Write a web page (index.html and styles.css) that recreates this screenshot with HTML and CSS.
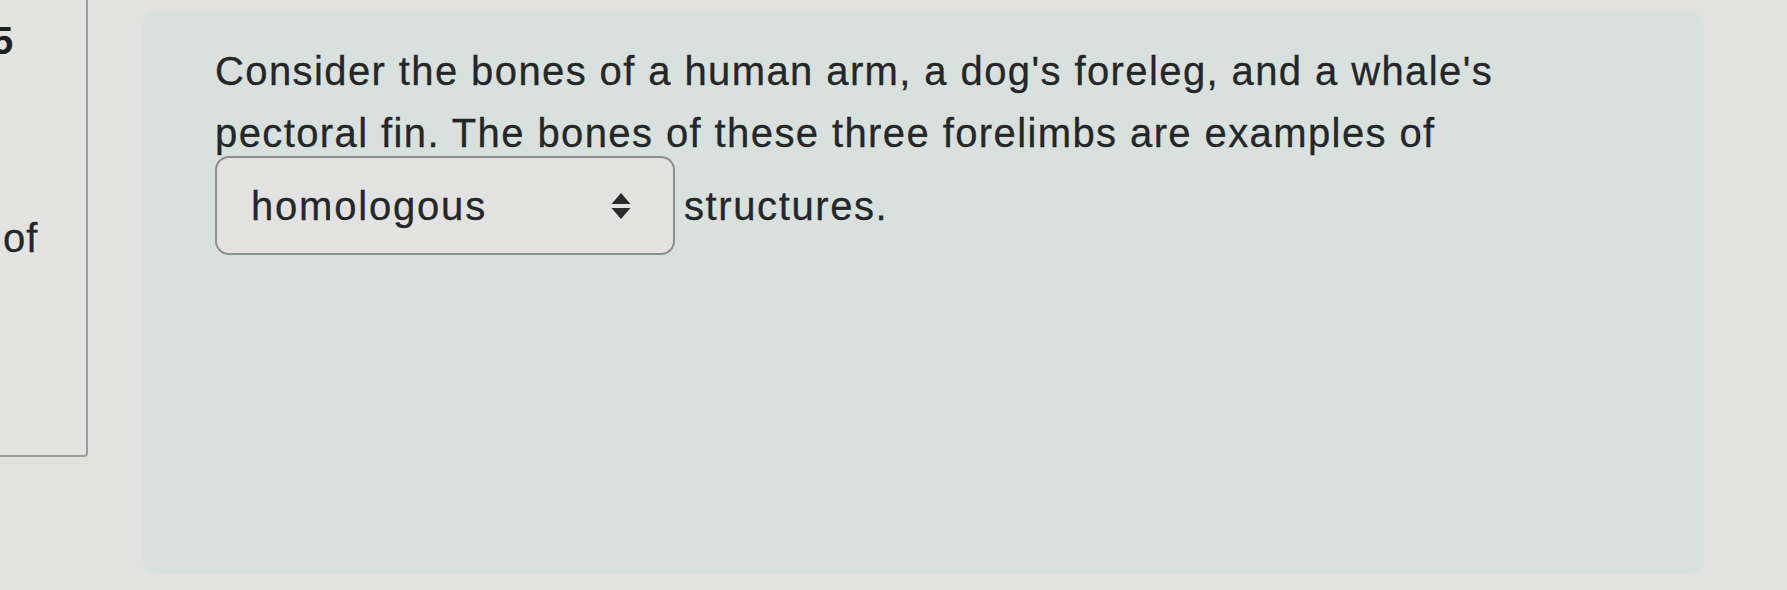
FILE: index.html
```html
<!DOCTYPE html>
<html lang="en">
<head>
<meta charset="utf-8">
<title>Question</title>
<link rel="stylesheet" href="styles.css">
</head>
<body>
<div class="page">
  <aside class="side">
    <div class="side-num">5</div>
    <div class="side-word">of</div>
  </aside>
  <main class="card">
    <p class="question">Consider the bones of a human arm, a dog's foreleg, and a whale's pectoral fin. The bones of these three forelimbs are examples of</p>
    <div class="answer-row">
      <div class="select">
        <span class="select-value">homologous</span>
        <svg class="select-arrows" width="22" height="28" viewBox="0 0 22 28" aria-hidden="true">
          <path d="M11 1 L20.5 12 L1.5 12 Z" fill="#2a2b2d"/>
          <path d="M11 27 L20.5 16 L1.5 16 Z" fill="#2a2b2d"/>
        </svg>
      </div>
      <span class="after">structures.</span>
    </div>
  </main>
</div>
</body>
</html>
```
FILE: styles.css
```css
html, body {
  margin: 0;
  padding: 0;
}
body {
  background: #e1e2e0;
  font-family: "Liberation Sans", Arial, Helvetica, sans-serif;
  color: #252628;
  width: 1787px;
  height: 590px;
  overflow: hidden;
}
.page {
  display: flex;
  align-items: flex-start;
}
.side {
  width: 86px;
  height: 455px;
  flex: none;
  background: #e3e4e2;
  border-right: 2px solid #9c9d9d;
  border-bottom: 2px solid #9c9d9d;
  border-bottom-right-radius: 4px;
  display: flex;
  flex-direction: column;
}
.side-num {
  margin-top: 22px;
  margin-left: -8px;
  font-size: 38px;
  font-weight: bold;
  line-height: 38px;
  color: #1f2022;
}
.side-word {
  margin-top: 156px;
  margin-left: 3px;
  font-size: 40px;
  line-height: 44px;
  letter-spacing: 1px;
  -webkit-text-stroke: 0.3px #252628;
}
.card {
  margin-left: 54px;
  margin-top: 11px;
  width: 1562px;
  height: 563px;
  box-sizing: border-box;
  background: #d9e1de;
  border-radius: 14px;
  padding: 29px 0 0 73px;
}
.question {
  margin: 0;
  max-width: 1310px;
  font-size: 40px;
  line-height: 62px;
  letter-spacing: 1.4px;
  -webkit-text-stroke: 0.3px #252628;
}
.answer-row {
  margin-top: -8px;
  display: flex;
  align-items: center;
  gap: 9px;
}
.select {
  width: 460px;
  height: 99px;
  box-sizing: border-box;
  border: 2px solid #8d8e8e;
  border-radius: 14px;
  background: #e2e3e1;
  display: flex;
  align-items: center;
  justify-content: space-between;
  padding: 0 41px 0 34px;
}
.select-value {
  font-size: 40px;
  letter-spacing: 1.8px;
  line-height: 44px;
  -webkit-text-stroke: 0.3px #252628;
}
.select-arrows {
  display: block;
}
.after {
  font-size: 40px;
  line-height: 62px;
  letter-spacing: 1.6px;
  -webkit-text-stroke: 0.3px #252628;
}
```
